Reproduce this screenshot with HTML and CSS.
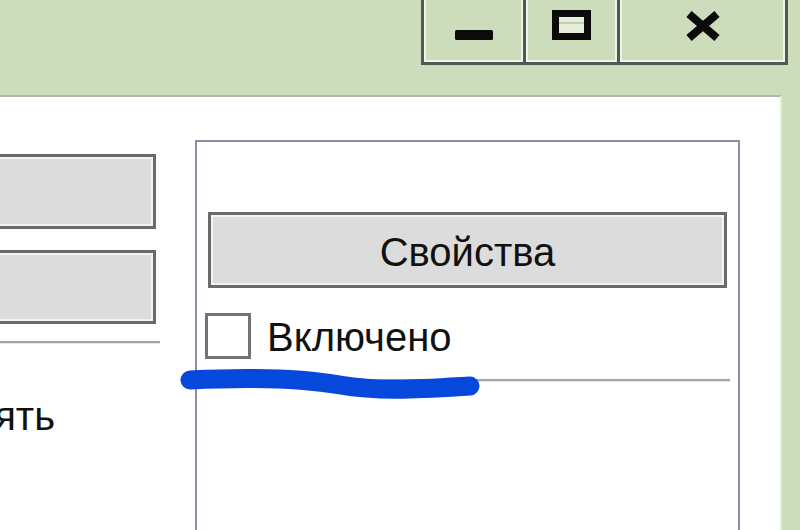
FILE: index.html
```html
<!DOCTYPE html>
<html lang="ru">
<head>
<meta charset="utf-8">
<title>Свойства</title>
<link rel="stylesheet" href="styles.css">
</head>
<body>
<div class="titlebar">
  <div class="caption-buttons">
    <div class="cbtn cbtn-min">
      <svg width="38" height="10" viewBox="0 0 38 10"><rect x="0" y="0" width="38" height="10" rx="1.5" fill="#0b0b0b"/></svg>
    </div>
    <div class="cbtn cbtn-max">
      <svg width="39" height="30" viewBox="0 0 39 30"><rect x="3.5" y="3.5" width="32" height="23" fill="#e4eedb" stroke="#0b0b0b" stroke-width="7"/><rect x="7" y="12" width="25" height="2" fill="#bfcdb0"/></svg>
    </div>
    <div class="cbtn cbtn-close">
      <svg width="38" height="32" viewBox="0 0 38 32"><path d="M5 4 L33 28 M33 4 L5 28" stroke="#0b0b0b" stroke-width="8" stroke-linecap="butt" fill="none"/></svg>
    </div>
  </div>
</div>
<div class="window">
  <div class="left-col">
    <div class="btn btn-left btn-left-1"></div>
    <div class="btn btn-left btn-left-2"></div>
    <div class="sep sep-left"></div>
    <div class="label-left">Удалять</div>
  </div>
  <div class="groupbox">
    <div class="btn btn-props">Свойства</div>
    <div class="check-row">
      <span class="checkbox"></span>
      <span class="check-text">Включено</span>
    </div>
    <div class="sep sep-group"></div>
  </div>
</div>
<svg class="marker" width="800" height="530" viewBox="0 0 800 530">
  <path d="M190 380 C 250 377, 300 378, 340 385 S 420 389, 470 386" stroke="#0647dc" stroke-width="19" stroke-linecap="round" fill="none"/>
</svg>
</body>
</html>
```

FILE: styles.css
```css
html, body {
  margin: 0;
  padding: 0;
}
body {
  width: 800px;
  height: 530px;
  overflow: hidden;
  background: #cddcbb;
  font-family: "Liberation Sans", Arial, sans-serif;
  color: #111;
  display: flex;
  flex-direction: column;
  position: relative;
}
.titlebar {
  height: 95px;
  flex: none;
  display: flex;
  justify-content: flex-end;
  align-items: flex-start;
  padding-right: 12px;
}
.caption-buttons {
  display: flex;
  height: 65px;
  box-sizing: border-box;
  border: 3px solid #4d5a56;
  border-top: none;
  border-left-width: 3px;
}
.cbtn {
  display: flex;
  justify-content: center;
  align-items: flex-start;
  box-sizing: border-box;
  height: 62px;
  box-shadow: inset 2px 0 0 #eef5e7, inset -2px 0 0 #eef5e7, inset 0 -2px 0 #eef5e7;
}
.cbtn-min {
  width: 99px;
  padding-top: 30px;
}
.cbtn-max {
  width: 94px;
  border-left: 3px solid #4d5a56;
  padding-top: 10px;
}
.cbtn-close {
  width: 168px;
  border-left: 3px solid #4d5a56;
  padding-top: 10px;
}
.window {
  flex: 1;
  margin-right: 18px;
  background: #fff;
  border-top: 2px solid #b2b9a9;
  border-right: 2px solid #e4ecdc;
  display: flex;
  align-items: flex-start;
  overflow: hidden;
}
.btn {
  box-sizing: border-box;
  background: #dcdcdc;
  border: 3px solid #6a6a6a;
  box-shadow: inset 0 0 0 2px #f3f3f3;
}
.left-col {
  flex: none;
  width: 300px;
  margin-left: -144px;
  padding-top: 57px;
}
.btn-left-1 {
  height: 75px;
}
.btn-left-2 {
  height: 74px;
  margin-top: 21px;
}
.sep {
  height: 2px;
  background: #a4a4a4;
  box-shadow: 0 1px 0 #e8e8e8;
}
.sep-left {
  margin-top: 17px;
  margin-right: -4px;
}
.label-left {
  margin-top: 50px;
  padding-right: 101px;
  text-align: right;
  font-size: 40px;
  line-height: 46px;
}
.groupbox {
  flex: none;
  box-sizing: border-box;
  width: 545px;
  min-height: 500px;
  margin-left: 39px;
  margin-top: 43px;
  border: 2px solid #8d8d9e;
  border-bottom: none;
  padding: 70px 11px 0 11px;
}
.btn-props {
  height: 76px;
  display: flex;
  align-items: center;
  justify-content: center;
  font-size: 40px;
  padding-top: 4px;
}
.check-row {
  display: flex;
  align-items: center;
  margin-top: 24px;
  margin-left: -3px;
}
.checkbox {
  box-sizing: border-box;
  width: 46px;
  height: 46px;
  border: 3px solid #737373;
  background: #fff;
  flex: none;
}
.check-text {
  margin-left: 16px;
  font-size: 40px;
  line-height: 46px;
  padding-top: 2px;
}
.sep-group {
  margin-top: 19px;
  margin-left: -8px;
  margin-right: -3px;
}
.marker {
  position: absolute;
  left: 0;
  top: 0;
  pointer-events: none;
}
```
